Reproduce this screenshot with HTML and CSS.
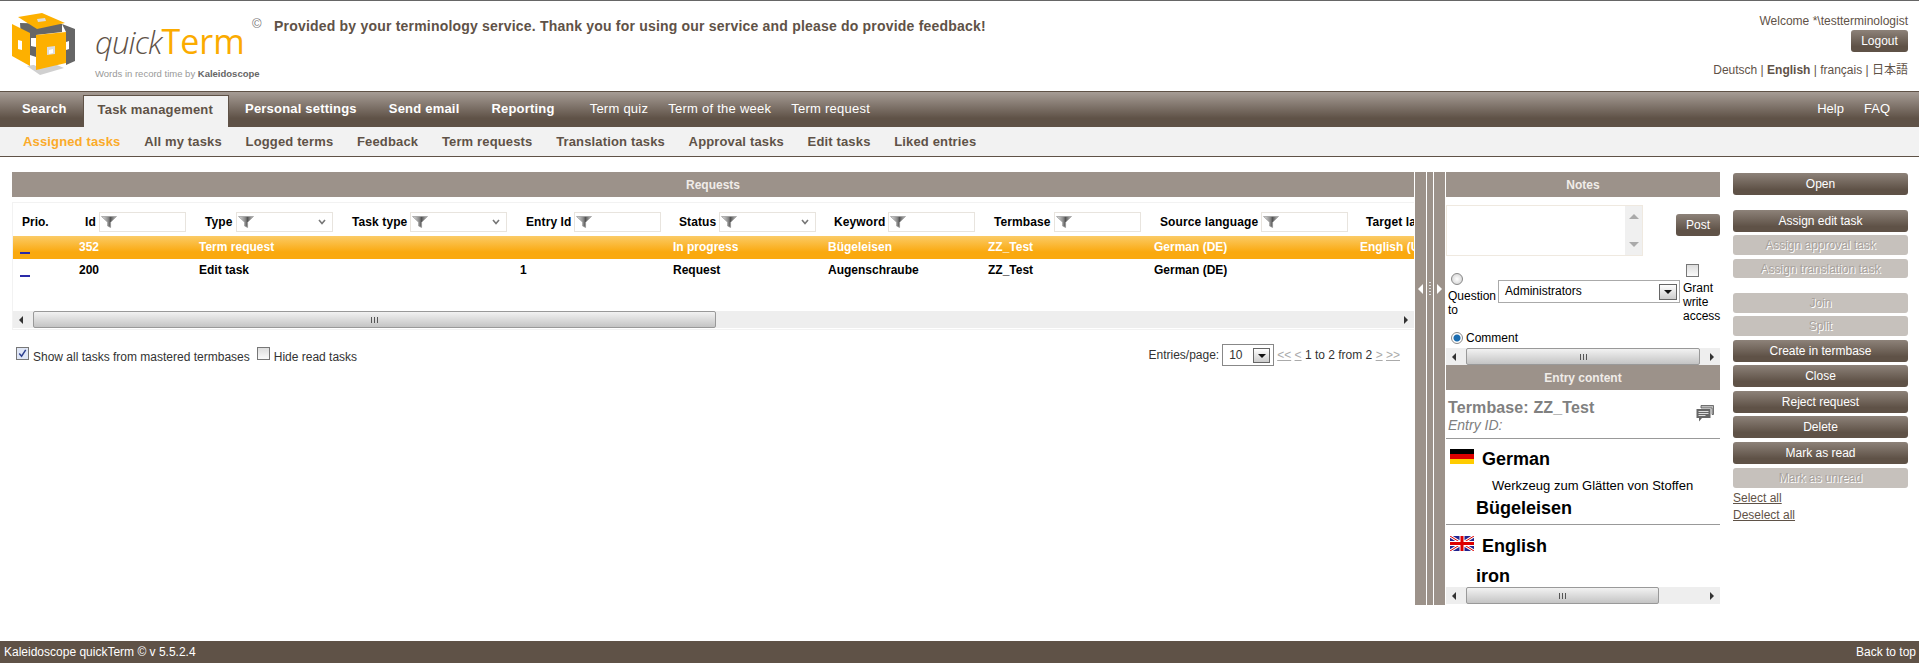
FILE: index.html
```html
<!DOCTYPE html>
<html lang="en">
<head>
<meta charset="utf-8">
<title>quickTerm</title>
<link rel="stylesheet" href="styles.css">
</head>
<body>
<svg class="defs" width="0" height="0" aria-hidden="true">
  <defs>
    <linearGradient id="fg" x1="0" x2="1" y1="0" y2="0">
      <stop offset="0" stop-color="#e4e4e4"/><stop offset=".45" stop-color="#8a8a8a"/><stop offset=".6" stop-color="#555"/><stop offset="1" stop-color="#c8c8c8"/>
    </linearGradient>
    <symbol id="funnel" viewBox="0 0 16 12">
      <path d="M0.5 0.5h15L9.6 6.2v5.3L6.6 10V6.2z" fill="url(#fg)" stroke="#999" stroke-width=".7"/>
    </symbol>
    <symbol id="chev" viewBox="0 0 8 6">
      <path d="M1 1l3 3.5L7 1" fill="none" stroke="#777" stroke-width="1.6"/>
    </symbol>
  </defs>
</svg>

<header class="top">
  <div class="brand">
    <svg class="cube" viewBox="12 13 64 64" width="64" height="64">
      <polygon points="27,66 50,62 64,68 40,75" fill="#d0d0d0"/>
      <polygon points="20,23 62,24 62,32 36,35 36,62 22,53" fill="#666"/>
      <polygon points="62,24 75,29 75,61 66,65 66,32" fill="#666"/>
      <polygon points="66,42 69,41 69,49 66,50" fill="#fff"/>
      <polygon points="31,38 36,38 36,47 31,46" fill="#fff"/>
      <polygon points="30,55 36,57 36,66 30,63" fill="#fff"/>
      <polygon points="18,17 42,13 65,23 37,29" fill="#fdb000"/>
      <polygon points="37,19 45,18 46,21 38,22" fill="#ddd"/>
      <polygon points="12,24 30,33 30,66 12,56" fill="#fdb000"/>
      <polygon points="18,40 22,41 22,50 18,49" fill="#fff"/>
      <polygon points="36,35 66,32 66,63 36,70" fill="#fdb000"/>
      <polygon points="47,47 55,46 55,54 47,55" fill="#ddd"/>
      <polygon points="49,50 53,49 53,53 49,54" fill="#fff"/>
    </svg>
    <div class="wordmark">
      <div class="wm-name"><span class="wm-quick">quick</span><span class="wm-term">Term</span></div>
      <div class="wm-tag">Words in record time by <b>Kaleidoscope</b></div>
    </div>
    <span class="copy">©</span>
  </div>
  <p class="message">Provided by your terminology service. Thank you for using our service and please do provide feedback!</p>
  <div class="user">
    <div class="welcome">Welcome *\testterminologist</div>
    <button class="btn btn-logout">Logout</button>
    <div class="langs">Deutsch | <b>English</b> | français | <span class="cjk">日本語</span></div>
  </div>
</header>

<nav class="nav">
  <a class="nav-b">Search</a>
  <a class="nav-b nav-active">Task management</a>
  <a class="nav-b">Personal settings</a>
  <a class="nav-b">Send email</a>
  <a class="nav-b nav-last">Reporting</a>
  <a class="nav-r nav-sp">Term quiz</a>
  <a class="nav-r nav-sp">Term of the week</a>
  <a class="nav-r nav-sp">Term request</a>
  <a class="nav-r nav-help">Help</a>
  <a class="nav-r">FAQ</a>
</nav>
<nav class="sub">
  <a class="sub-active">Assigned tasks</a>
  <a>All my tasks</a>
  <a>Logged terms</a>
  <a>Feedback</a>
  <a>Term requests</a>
  <a>Translation tasks</a>
  <a>Approval tasks</a>
  <a>Edit tasks</a>
  <a>Liked entries</a>
</nav>

<main class="main">
  <section class="requests">
    <h2 class="bar">Requests</h2>
    <div class="box">
      <div class="tablewrap">
        <table class="grid">
          <colgroup>
            <col class="c0"><col class="c1"><col class="c2"><col class="c3"><col class="c4"><col class="c5"><col class="c6"><col class="c7"><col class="c8"><col class="c9">
          </colgroup>
          <thead>
            <tr>
              <th><span class="prio">Prio.</span></th>
              <th><div class="hd">Id<span class="flt"><svg class="fi"><use href="#funnel"/></svg></span></div></th>
              <th><div class="hd">Type<span class="flt flt-sel"><svg class="fi"><use href="#funnel"/></svg><svg class="ch"><use href="#chev"/></svg></span></div></th>
              <th><div class="hd hd-tight">Task type<span class="flt flt-sel"><svg class="fi"><use href="#funnel"/></svg><svg class="ch"><use href="#chev"/></svg></span></div></th>
              <th><div class="hd">Entry Id<span class="flt"><svg class="fi"><use href="#funnel"/></svg></span></div></th>
              <th><div class="hd">Status<span class="flt flt-sel"><svg class="fi"><use href="#funnel"/></svg><svg class="ch"><use href="#chev"/></svg></span></div></th>
              <th><div class="hd">Keyword<span class="flt"><svg class="fi"><use href="#funnel"/></svg></span></div></th>
              <th><div class="hd">Termbase<span class="flt"><svg class="fi"><use href="#funnel"/></svg></span></div></th>
              <th><div class="hd">Source language<span class="flt"><svg class="fi"><use href="#funnel"/></svg></span></div></th>
              <th><div class="hd">Target language<span class="flt"><svg class="fi"><use href="#funnel"/></svg></span></div></th>
            </tr>
          </thead>
          <tbody>
            <tr class="sel">
              <td><span class="dash"></span></td><td>352</td><td>Term request</td><td></td><td></td><td>In progress</td><td>Bügeleisen</td><td>ZZ_Test</td><td>German (DE)</td><td>English (UK)</td>
            </tr>
            <tr>
              <td><span class="dash"></span></td><td>200</td><td>Edit task</td><td></td><td>1</td><td>Request</td><td>Augenschraube</td><td>ZZ_Test</td><td>German (DE)</td><td></td>
            </tr>
          </tbody>
        </table>
      </div>
      <div class="hscroll hs-req">
        <span class="arr arr-l"></span>
        <div class="track"><div class="thumb t-req"><i></i></div></div>
        <span class="arr arr-r"></span>
      </div>
    </div>
    <div class="listfoot">
      <div class="opts">
        <span class="chk chk-on"><svg viewBox="0 0 12 12" width="11" height="11"><path d="M2.5 6l2.5 3 4.5-7" fill="none" stroke="#2c3f8f" stroke-width="1.6"/></svg></span>
        <span class="opt-l">Show all tasks from mastered termbases</span>
        <span class="chk"></span>
        <span class="opt-l">Hide read tasks</span>
      </div>
      <div class="pager">
        <span>Entries/page:</span>
        <span class="pg-sel">10<span class="dd"></span></span>
        <span class="pg-links"><a>&lt;&lt;</a> <a>&lt;</a> <span class="pg-txt">1 to 2 from 2</span> <a>&gt;</a> <a>&gt;&gt;</a></span>
      </div>
    </div>
  </section>

  <div class="splitter">
    <div class="sp sp-wide"><span class="tri tri-l"></span></div>
    <div class="sp sp-mid"><span class="dots"></span></div>
    <div class="sp sp-wide"><span class="tri tri-r"></span></div>
  </div>

  <aside class="side">
    <h2 class="bar">Notes</h2>
    <div class="notes">
      <div class="n-row1">
        <div class="ta">
          <div class="ta-field"></div>
          <div class="ta-bar"><span class="arr arr-u"></span><span class="arr arr-d"></span></div>
        </div>
        <button class="btn btn-post">Post</button>
      </div>
      <div class="n-row2">
        <div class="q-col">
          <span class="radio"></span>
          <span class="q-l">Question to</span>
        </div>
        <div class="n-sel">Administrators<span class="dd"></span></div>
        <div class="g-col">
          <span class="chk chk-big"></span>
          <span class="g-l">Grant write access</span>
        </div>
      </div>
      <div class="n-row3"><span class="radio radio-on"></span><span>Comment</span></div>
    </div>
    <div class="hscroll hs-side">
      <span class="arr arr-l"></span>
      <div class="track"><div class="thumb t-notes"><i></i></div></div>
      <span class="arr arr-r"></span>
    </div>
    <h2 class="bar">Entry content</h2>
    <div class="entry">
      <div class="e-head">
        <div>
          <div class="e-tb">Termbase: ZZ_Test</div>
          <div class="e-id">Entry ID:</div>
        </div>
        <svg class="e-ico" viewBox="0 0 18 17" width="18" height="17">
          <path d="M5 0.5h12.5v9H16V3H5z" fill="#bbb" stroke="#555" stroke-width=".8"/>
          <path d="M0.5 4h14v9H6l-3 3.5V13H0.5z" fill="#666"/>
          <path d="M2.5 6.5h10M2.5 8.5h10M2.5 10.5h7" stroke="#ddd" stroke-width="1"/>
        </svg>
      </div>
      <div class="e-lang">
        <div class="l-row">
          <svg class="flag" viewBox="0 0 24 15" width="24" height="15"><rect width="24" height="5" fill="#000"/><rect y="5" width="24" height="5" fill="#d00"/><rect y="10" width="24" height="5" fill="#fc0"/></svg>
          <span class="l-name">German</span>
        </div>
        <div class="l-def">Werkzeug zum Glätten von Stoffen</div>
        <div class="l-term">Bügeleisen</div>
      </div>
      <div class="e-lang e-last">
        <div class="l-row">
          <svg class="flag" viewBox="0 0 24 15" width="24" height="15"><rect width="24" height="15" fill="#23238e"/><path d="M0 0l24 15M24 0L0 15" stroke="#fff" stroke-width="3"/><path d="M0 0l24 15M24 0L0 15" stroke="#d00" stroke-width="1"/><path d="M12 0v15M0 7.5h24" stroke="#fff" stroke-width="5"/><path d="M12 0v15M0 7.5h24" stroke="#d00" stroke-width="3"/></svg>
          <span class="l-name">English</span>
        </div>
        <div class="l-term l-term2">iron</div>
      </div>
    </div>
    <div class="hscroll hs-side">
      <span class="arr arr-l"></span>
      <div class="track"><div class="thumb t-entry"><i></i></div></div>
      <span class="arr arr-r"></span>
    </div>
  </aside>

  <div class="actions">
    <button class="btn act g15">Open</button>
    <button class="btn act">Assign edit task</button>
    <button class="btn act off g4">Assign approval task</button>
    <button class="btn act off g15 h19">Assign translation task</button>
    <button class="btn act off">Join</button>
    <button class="btn act off g4">Split</button>
    <button class="btn act">Create in termbase</button>
    <button class="btn act g4">Close</button>
    <button class="btn act">Reject request</button>
    <button class="btn act g4">Delete</button>
    <button class="btn act g4">Mark as read</button>
    <button class="btn act off g2">Mark as unread</button>
    <a class="lnk">Select all</a>
    <a class="lnk">Deselect all</a>
  </div>
</main>

<footer class="foot">
  <span>Kaleidoscope quickTerm © v 5.5.2.4</span>
  <span>Back to top</span>
</footer>
</body>
</html>
```
FILE: styles.css
```css
* { box-sizing: border-box; }
html, body { margin: 0; padding: 0; }
body {
  font-family: "Liberation Sans", Arial, sans-serif;
  font-size: 12px;
  color: #000;
  background: #fff;
  min-height: 663px;
  height: 100vh;
  display: flex;
  flex-direction: column;
  overflow: hidden;
}
.defs { position: absolute; }

/* Header */
.top {
  height: 91px;
  border-top: 1px solid #666;
  display: flex;
  flex: none;
}
.brand { display: flex; padding: 12px 0 0 12px; width: 274px; flex: none; }
.cube { flex: none; }
.wordmark { margin-left: 19px; width: 170px; flex: none; }
.wm-name { font-family: "Open Sans", sans-serif; font-size: 34px; line-height: 40px; margin-top: 8px; white-space: nowrap; font-weight: 400; }
.wm-quick { font-style: italic; color: #5f5247; font-size: 31px; font-weight: 300; letter-spacing: -.8px; }
.wm-term { color: #fbab00; }
.wm-tag { font-size: 9.5px; color: #999; white-space: nowrap; margin-top: 6px; }
.wm-tag b { color: #666; }
.copy { font-size: 13px; color: #777; margin: 3px 0 0 -13px; }
.message {
  margin: 17px 0 0;
  font-size: 14px;
  font-weight: bold;
  color: #5f5247;
  line-height: 16px;
  letter-spacing: .2px;
  flex: 1;
  white-space: nowrap;
}
.user {
  padding: 13px 11px 0 0;
  text-align: right;
  color: #5f5247;
  display: flex;
  flex-direction: column;
  align-items: flex-end;
}
.welcome { line-height: 14px; }
.btn {
  font-family: inherit;
  font-size: 12px;
  border: 0;
  border-radius: 3px;
  color: #fff;
  background: linear-gradient(#8d8279, #5f5247 75%);
  padding: 0;
  height: 22px;
}
.btn-logout { width: 57px; margin-top: 2px; }
.langs { margin-top: 10px; line-height: 14px; }
.cjk { font-family: "Noto Sans CJK JP", sans-serif; }

/* Nav */
.nav {
  height: 36px;
  flex: none;
  display: flex;
  align-items: stretch;
  padding: 3px 0 0 6px;
  border-top: 1px solid #5f5247;
  background: linear-gradient(#a69c95, #5f5247 75%);
  font-size: 13px;
  color: #fff;
}
.nav a { display: flex; align-items: center; padding-bottom: 5px; white-space: nowrap; }
.nav-b { font-weight: bold; padding-left: 16px; padding-right: 16px; letter-spacing: .2px; }
.nav-active {
  background: #f2f2f2;
  color: #5f5247;
  border: 1px solid #5f5247;
  border-bottom: 0;
  padding-left: 14px;
  padding-right: 15px;
}
.nav-last { padding-right: 35px; }
.nav-r { padding-right: 20px; }
.nav-sp { letter-spacing: .25px; }
.nav-help { margin-left: auto; }
.nav-r:last-child { padding-right: 29px; }

.sub {
  height: 30px;
  flex: none;
  display: flex;
  gap: 23.7px;
  align-items: center;
  padding-left: 23px;
  background: #f2f2f2;
  border-bottom: 1px solid #5f5247;
  font-size: 13px;
  font-weight: bold;
  color: #5f5247;
  letter-spacing: .15px;
}
.sub-active { color: #fbab2a; }

/* Main */
.main {
  flex: 1;
  display: flex;
  align-items: flex-start;
  padding: 15px 0 0 12px;
  min-height: 0;
}
.bar {
  margin: 0;
  height: 25px;
  background: #9c928a;
  color: #f0ece8;
  font-size: 12px;
  font-weight: bold;
  line-height: 26px;
  text-align: center;
  flex: none;
}
.requests { width: 1402px; flex: none; }
.box {
  margin-top: 5px;
  border: 1px solid #f2f2f2;
  border-right: 0;
  height: 128px;
  display: flex;
  flex-direction: column;
}
.tablewrap { flex: 1; overflow: hidden; padding-top: 9px; }
.grid { border-collapse: collapse; table-layout: fixed; width: 1520px; font-weight: bold; }
.c0 { width: 59px; } .c1 { width: 120px; } .c2 { width: 153px; } .c3 { width: 168px; }
.c4 { width: 153px; } .c5 { width: 155px; } .c6 { width: 160px; } .c7 { width: 166px; }
.c8 { width: 206px; } .c9 { width: 180px; }
.grid th { padding: 0 0 4px; font-weight: bold; text-align: left; height: 24px; }
.prio { margin-left: 9px; }
.hd { display: flex; align-items: center; padding-left: 13px; gap: 3px; white-space: nowrap; letter-spacing: .1px; }
.hd-tight { padding-left: 7px; }
.flt {
  width: 87px;
  height: 20px;
  border: 1px solid #e8e4de;
  display: flex;
  align-items: center;
  justify-content: space-between;
  padding: 0 6px 0 0;
  flex: none;
}
.flt-sel { width: 97px; }
.fi { width: 16px; height: 12px; margin-left: 1px; }
.ch { width: 8px; height: 6px; }
.grid td { height: 23px; padding: 0 0 1px 7px; white-space: nowrap; vertical-align: middle; overflow: hidden; }
.grid td:first-child { padding: 0; vertical-align: top; }
.sel td { background: linear-gradient(#fbcb66, #faa90f 70%); color: #fff; }
.dash { display: block; width: 10px; height: 2px; background: #2a2aa8; margin: 16px 0 0 7px; }

.hscroll { display: flex; align-items: center; height: 17px; background: #eee; flex: none; }
.hs-req { margin-bottom: 1px; }
.arr { width: 0; height: 0; display: block; flex: none; }
.arr-l { border: 4px solid transparent; border-right: 4px solid #333; border-left: 0; margin: 0 4px 0 6px; }
.arr-r { border: 4px solid transparent; border-left: 4px solid #333; border-right: 0; margin: 0 6px 0 6px; }
.arr-u { border: 5px solid transparent; border-bottom: 5px solid #aaa; border-top: 0; }
.arr-d { border: 5px solid transparent; border-top: 5px solid #aaa; border-bottom: 0; }
.track { flex: 1; height: 100%; }
.thumb {
  height: 100%;
  border: 1px solid #999;
  border-radius: 2px;
  background: linear-gradient(#f2f2f2, #c4c4c4);
  display: flex;
  align-items: center;
  justify-content: center;
}
.thumb i { width: 7px; height: 6px; background: repeating-linear-gradient(90deg, #555 0 1px, transparent 1px 3px); }
.t-req { width: 683px; margin-left: 6px; }
.hs-side .arr-l { margin-right: 6px; }
.t-notes { width: 234px; margin-left: 4px; }
.t-entry { width: 193px; margin-left: 4px; }

.listfoot { display: flex; justify-content: space-between; padding: 13px 14px 0 4px; }
.opts { display: flex; align-items: flex-start; padding-top: 4px; color: #333; }
.chk {
  width: 13px;
  height: 13px;
  border: 1px solid #777;
  background: linear-gradient(#ddd, #fafafa);
  display: inline-flex;
  align-items: center;
  justify-content: center;
  flex: none;
}
.chk-on { background: #dfe6f6; }
.opt-l { margin: 3px 7px 0 4px; line-height: 14px; }
.pager { display: flex; align-items: center; gap: 3px; color: #333; margin-top: 1px; }
.pg-sel {
  width: 52px;
  height: 22px;
  border: 1px solid #888;
  display: flex;
  align-items: center;
  justify-content: space-between;
  padding: 0 3px 0 6px;
}
.dd {
  width: 17px;
  height: 15px;
  border: 1px solid #666;
  background: linear-gradient(#fff, #ccc);
  position: relative;
  flex: none;
}
.dd::after {
  content: "";
  position: absolute;
  left: 4px;
  top: 5px;
  border: 4px solid transparent;
  border-top: 4px solid #111;
  border-bottom: 0;
}
.pg-links a { color: #aaa; text-decoration: underline; }
.pg-txt { color: #333; }

/* Splitter */
.splitter { display: flex; height: 433px; margin-left: 1px; gap: 1px; flex: none; }
.sp { background: #9c928a; display: flex; align-items: center; justify-content: center; padding-bottom: 200px; }
.sp-wide { width: 11px; }
.sp-mid { width: 6px; }
.tri { display: block; width: 0; height: 0; border: 5px solid transparent; }
.tri-l { border-right: 5px solid #fff; border-left: 0; }
.tri-r { border-left: 5px solid #fff; border-right: 0; }
.dots { display: block; width: 2px; height: 14px; background: repeating-linear-gradient(#ddd 0 1px, transparent 1px 3px); }

/* Side */
.side { width: 274px; margin-left: 1px; height: 433px; flex: none; display: flex; flex-direction: column; }
.notes { height: 151px; padding-top: 8px; flex: none; }
.n-row1 { display: flex; align-items: flex-start; }
.ta { width: 197px; height: 51px; border: 1px solid #efe9e0; display: flex; }
.ta-field { flex: 1; }
.ta-bar { width: 17px; background: #f0f0f0; display: flex; flex-direction: column; align-items: center; justify-content: space-between; padding: 8px 0; }
.btn-post { width: 44px; margin: 9px 0 0 auto; font-size: 12px; }
.n-row2 { display: flex; margin-top: 8px; }
.q-col { width: 52px; padding: 9px 0 0 2px; flex: none; display: flex; flex-direction: column; align-items: flex-start; }
.radio {
  width: 12px;
  height: 12px;
  border-radius: 50%;
  border: 1px solid #888;
  background: radial-gradient(#fff, #ccc);
  display: block;
  flex: none;
  margin-left: 3px;
}
.radio-on { background: radial-gradient(#1a6cb0 0 3px, #fff 4px); }
.q-l { line-height: 14px; margin-top: 4px; width: 50px; }
.n-sel {
  width: 182px;
  height: 23px;
  margin-top: 16px;
  border: 1px solid #aaa;
  padding: 0 2px 2px 6px;
  display: flex;
  align-items: center;
  justify-content: space-between;
  flex: none;
}
.n-sel .dd { margin-top: 2px; height: 16px; width: 18px; }
.g-col { margin-left: 3px; display: flex; flex-direction: column; align-items: flex-start; }
.chk-big { margin-left: 3px; }
.g-l { line-height: 14px; margin-top: 4px; width: 40px; }
.n-row3 { display: flex; align-items: center; gap: 3px; margin: 8px 0 0 2px; line-height: 14px; }

.entry { height: 197px; overflow: hidden; flex: none; }
.e-head {
  display: flex;
  justify-content: space-between;
  padding: 8px 6px 5px 2px;
  border-bottom: 1px solid #999;
}
.e-tb { font-size: 16px; font-weight: bold; color: #808080; line-height: 19px; letter-spacing: .12px; }
.e-id { font-size: 14px; font-style: italic; color: #808080; line-height: 16px; }
.e-ico { margin-top: 7px; }
.e-lang { padding: 10px 0 5px 4px; border-bottom: 1px solid #999; }
.e-last { border-bottom: 0; padding-top: 11px; }
.l-row { display: flex; height: 20px; }
.flag { flex: none; }
.l-name { font-size: 18px; font-weight: bold; line-height: 20px; margin-left: 8px; }
.l-def { font-size: 13px; line-height: 14px; margin: 10px 0 0 42px; white-space: nowrap; }
.l-term { font-size: 18px; font-weight: bold; line-height: 22px; margin: 4px 0 0 26px; }
.l-term2 { margin-top: 9px; }

/* Actions */
.actions { width: 175px; margin-left: 13px; flex: none; display: flex; flex-direction: column; margin-top: 1px; }
.act { height: 22px; margin-bottom: 3px; width: 100%; flex: none; }
.g4 { margin-bottom: 4px; }
.g15 { margin-bottom: 15px; }
.g2 { margin-bottom: 2px; }
.off {
  height: 20px;
  background: #c6c1bc;
  color: #a8a29c;
  text-shadow: 1px 1px 0 #fff;
}
.h19 { height: 19px; }
.lnk { color: #5f5247; text-decoration: underline; line-height: 17px; }

/* Footer */
.foot {
  height: 22px;
  flex: none;
  background: #5f5247;
  color: #fff;
  display: flex;
  justify-content: space-between;
  align-items: center;
  padding: 0 3px 0 4px;
}
```
